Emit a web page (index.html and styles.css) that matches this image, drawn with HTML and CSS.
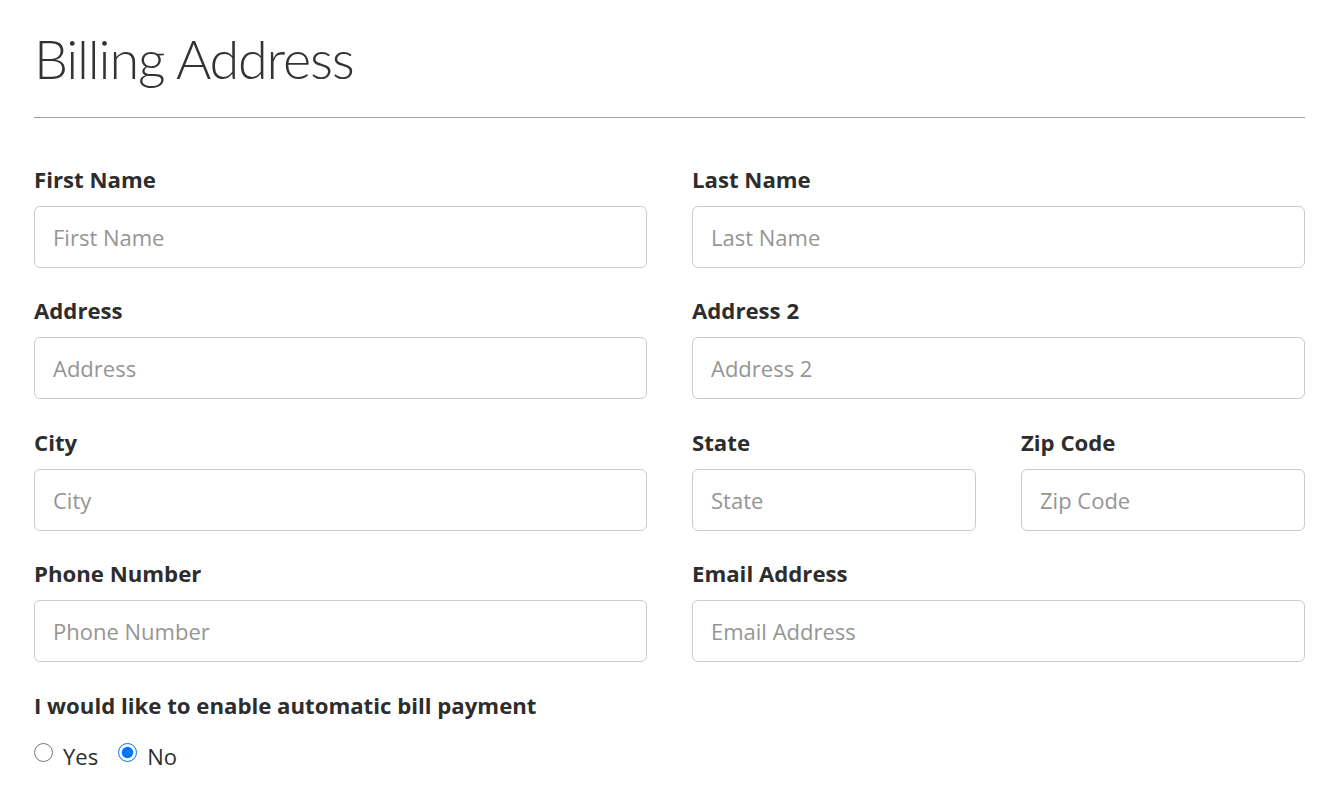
FILE: index.html
```html
<!DOCTYPE html>
<html lang="en">
<head>
<meta charset="utf-8">
<title>Billing Address</title>
<link rel="stylesheet" href="styles.css">
</head>
<body>
<main class="page">
  <h1 class="title">Billing Address</h1>
  <hr class="rule">
  <form class="form">
    <div class="row">
      <div class="field"><label class="label" for="fn">First Name</label><input class="input" id="fn" type="text" placeholder="First Name"></div>
      <div class="field"><label class="label" for="ln">Last Name</label><input class="input" id="ln" type="text" placeholder="Last Name"></div>
    </div>
    <div class="row">
      <div class="field"><label class="label" for="a1">Address</label><input class="input" id="a1" type="text" placeholder="Address"></div>
      <div class="field"><label class="label" for="a2">Address 2</label><input class="input" id="a2" type="text" placeholder="Address 2"></div>
    </div>
    <div class="row">
      <div class="field"><label class="label" for="ci">City</label><input class="input" id="ci" type="text" placeholder="City"></div>
      <div class="row-split">
        <div class="field"><label class="label" for="st">State</label><input class="input" id="st" type="text" placeholder="State"></div>
        <div class="field"><label class="label" for="zc">Zip Code</label><input class="input" id="zc" type="text" placeholder="Zip Code"></div>
      </div>
    </div>
    <div class="row">
      <div class="field"><label class="label" for="ph">Phone Number</label><input class="input" id="ph" type="text" placeholder="Phone Number"></div>
      <div class="field"><label class="label" for="em">Email Address</label><input class="input" id="em" type="text" placeholder="Email Address"></div>
    </div>
    <div class="pay">
      <div class="label">I would like to enable automatic bill payment</div>
      <div class="radios">
        <label class="radio"><input type="radio" name="pay" value="yes"><span>Yes</span></label>
        <label class="radio"><input type="radio" name="pay" value="no" checked><span>No</span></label>
      </div>
    </div>
  </form>
</main>
</body>
</html>
```
FILE: styles.css
```css
html, body {
  margin: 0;
  padding: 0;
  background: #ffffff;
}
body {
  font-family: "Open Sans", Lato, "Liberation Sans", sans-serif;
  color: #2d2d2d;
}
.page {
  width: 1271px;
  margin-left: 34px;
  padding-top: 19px;
}
.title {
  font-family: Lato, "Open Sans", sans-serif;
  font-weight: 300;
  font-size: 54px;
  line-height: 80px;
  margin: 0;
  color: #333333;
  letter-spacing: -1.2px;
}
.rule {
  margin: 18px 0 0 0;
  border: 0;
  border-top: 1px solid #9e9e9e;
  height: 0;
}
.form {
  padding-top: 48px;
}
.row {
  display: grid;
  grid-template-columns: 1fr 1fr;
  column-gap: 45px;
  margin-bottom: 29.4px;
}
.row-split {
  display: grid;
  grid-template-columns: 1fr 1fr;
  column-gap: 45px;
}
.field {
  display: flex;
  flex-direction: column;
}
.label {
  font-weight: 700;
  font-size: 22.2px;
  line-height: 28px;
  color: #2d2d2d;
  margin-bottom: 12px;
}
.input {
  box-sizing: border-box;
  height: 62px;
  width: 100%;
  border: 1px solid #cccccc;
  border-radius: 6px;
  padding: 0 18px;
  font-family: inherit;
  font-size: 22px;
  color: #333;
  background: #fff;
  outline: none;
}
.input::placeholder {
  color: #959595;
}
.pay .label {
  margin-bottom: 20px;
}
.radios {
  display: flex;
  gap: 20px;
}
.radio {
  display: flex;
  align-items: flex-start;
  gap: 10px;
  font-size: 22px;
  line-height: 32px;
  color: #2d2d2d;
}
.radio input {
  width: 19px;
  height: 19px;
  margin: 3px 0 0 0;
  accent-color: #0075ff;
}
```
